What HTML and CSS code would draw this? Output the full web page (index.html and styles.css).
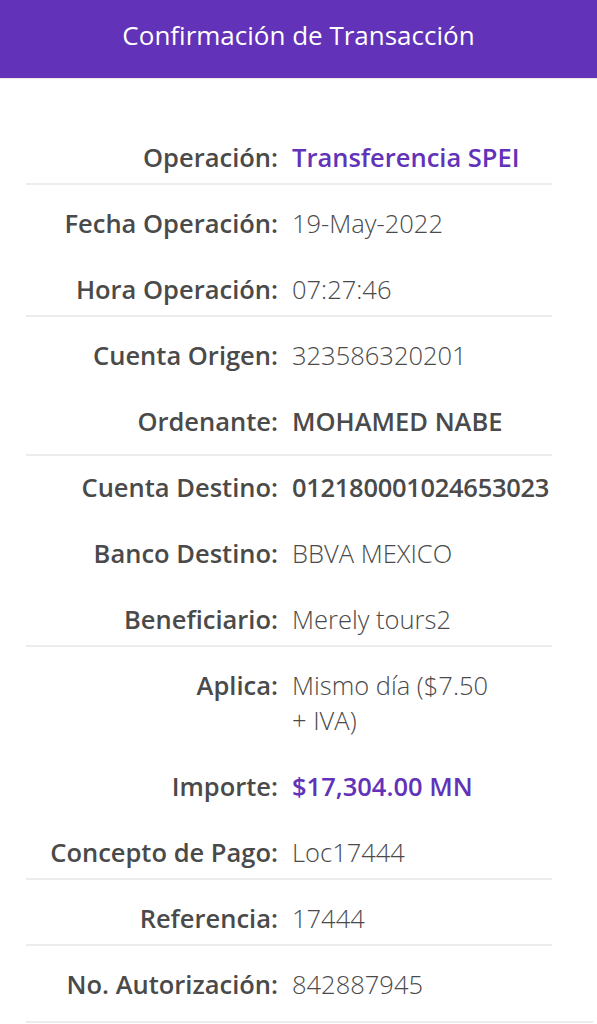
FILE: index.html
```html
<!DOCTYPE html>
<html lang="es">
<head>
<meta charset="utf-8">
<title>Confirmación de Transacción</title>
<link rel="stylesheet" href="styles.css">
</head>
<body>
<header class="topbar">
  <h1 class="title">Confirmación de Transacción</h1>
</header>
<main class="details">
  <div class="row divider">
    <span class="label">Operación:</span>
    <span class="value accent">Transferencia SPEI</span>
  </div>
  <div class="row">
    <span class="label">Fecha Operación:</span>
    <span class="value">19-May-2022</span>
  </div>
  <div class="row divider">
    <span class="label">Hora Operación:</span>
    <span class="value">07:27:46</span>
  </div>
  <div class="row">
    <span class="label">Cuenta Origen:</span>
    <span class="value">323586320201</span>
  </div>
  <div class="row divider low">
    <span class="label">Ordenante:</span>
    <span class="value strong">MOHAMED NABE</span>
  </div>
  <div class="row">
    <span class="label">Cuenta Destino:</span>
    <span class="value strong digits">012180001024653023</span>
  </div>
  <div class="row">
    <span class="label">Banco Destino:</span>
    <span class="value">BBVA MEXICO</span>
  </div>
  <div class="row divider">
    <span class="label">Beneficiario:</span>
    <span class="value">Merely tours2</span>
  </div>
  <div class="row">
    <span class="label">Aplica:</span>
    <span class="value">Mismo día ($7.50 +&nbsp;IVA)</span>
  </div>
  <div class="row">
    <span class="label">Importe:</span>
    <span class="value accent">$17,304.00 MN</span>
  </div>
  <div class="row divider">
    <span class="label">Concepto de Pago:</span>
    <span class="value">Loc17444</span>
  </div>
  <div class="row divider">
    <span class="label">Referencia:</span>
    <span class="value">17444</span>
  </div>
  <div class="row last">
    <span class="label">No. Autorización:</span>
    <span class="value">842887945</span>
  </div>
</main>
</body>
</html>
```

FILE: styles.css
```css
html, body {
  margin: 0;
  padding: 0;
  background: #ffffff;
}

body {
  font-family: "Open Sans", "Noto Sans", "Liberation Sans", sans-serif;
  color: #4a4a4a;
  overflow: hidden;
}

.topbar {
  background: #6232b8;
  height: 78px;
  box-sizing: border-box;
  padding-top: 17px;
  box-shadow: 0 1px 1px rgba(0, 0, 0, 0.08);
}

.title {
  margin: 0;
  text-align: center;
  color: #ffffff;
  font-size: 26px;
  font-weight: 400;
  line-height: 36px;
}

.details {
  margin: 46px 45px 0 26px;
}

.row {
  display: grid;
  grid-template-columns: 252px 1fr;
  column-gap: 14px;
  padding: 15.5px 0;
  font-size: 25.5px;
  line-height: 35px;
}

.row.divider {
  border-bottom: 2px solid #ececec;
  padding-bottom: 8px;
}

.row.divider + .row {
  padding-top: 21px;
}

.row.divider.low {
  padding-bottom: 15px;
}

.row.divider.low + .row {
  padding-top: 14px;
}

.row.last {
  padding-bottom: 19.5px;
  margin-right: -41px;
  border-bottom: 2px solid #ececec;
}

.row.last .value {
  margin-right: 41px;
}

.label {
  text-align: right;
  font-weight: 600;
  color: #4a4a4a;
  white-space: nowrap;
}

.value {
  font-weight: 300;
  color: #4a4a4a;
}

.value.strong {
  font-weight: 600;
}

.value.digits {
  letter-spacing: -0.3px;
}

.value.accent {
  font-weight: 600;
  color: #6232b8;
}
```
